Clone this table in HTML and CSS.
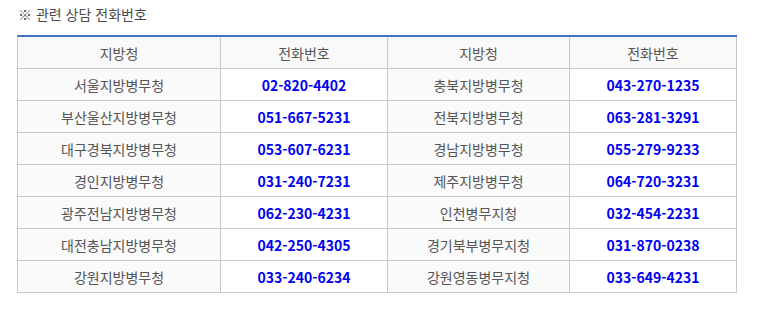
FILE: index.html
```html
<!DOCTYPE html>
<html lang="ko">
<head>
<meta charset="utf-8">
<title>관련 상담 전화번호</title>
<link rel="stylesheet" href="styles.css">
</head>
<body>
<div class="page">
  <p class="title">※ 관련 상담 전화번호</p>
  <div class="grid">
    <div class="cell head">지방청</div>
    <div class="cell head">전화번호</div>
    <div class="cell head">지방청</div>
    <div class="cell head">전화번호</div>

    <div class="cell name">서울지방병무청</div>
    <div class="cell tel">02-820-4402</div>
    <div class="cell name">충북지방병무청</div>
    <div class="cell tel">043-270-1235</div>

    <div class="cell name">부산울산지방병무청</div>
    <div class="cell tel">051-667-5231</div>
    <div class="cell name">전북지방병무청</div>
    <div class="cell tel">063-281-3291</div>

    <div class="cell name">대구경북지방병무청</div>
    <div class="cell tel">053-607-6231</div>
    <div class="cell name">경남지방병무청</div>
    <div class="cell tel">055-279-9233</div>

    <div class="cell name">경인지방병무청</div>
    <div class="cell tel">031-240-7231</div>
    <div class="cell name">제주지방병무청</div>
    <div class="cell tel">064-720-3231</div>

    <div class="cell name">광주전남지방병무청</div>
    <div class="cell tel">062-230-4231</div>
    <div class="cell name">인천병무지청</div>
    <div class="cell tel">032-454-2231</div>

    <div class="cell name">대전충남지방병무청</div>
    <div class="cell tel">042-250-4305</div>
    <div class="cell name">경기북부병무지청</div>
    <div class="cell tel">031-870-0238</div>

    <div class="cell name">강원지방병무청</div>
    <div class="cell tel">033-240-6234</div>
    <div class="cell name">강원영동병무지청</div>
    <div class="cell tel">033-649-4231</div>
  </div>
</div>
</body>
</html>
```
FILE: styles.css
```css
html, body {
  margin: 0;
  padding: 0;
  background: #fff;
}
.page {
  padding: 5px 0 0 17px;
  font-family: "Noto Sans CJK KR", "Noto Sans", sans-serif;
  color: #555;
}
.title {
  margin: 0 0 12px 1px;
  font-size: 14px;
  line-height: 18px;
  color: #4a4a4a;
}
.grid {
  display: grid;
  grid-template-columns: 203px 167px 182px 167px;
  width: 720px;
  box-sizing: border-box;
  border-top: 2px solid #4472c4;
  border-left: 1px solid #c8c8c8;
}
.cell {
  box-sizing: border-box;
  height: 32px;
  border-right: 1px solid #c8c8c8;
  border-bottom: 1px solid #c8c8c8;
  display: flex;
  align-items: center;
  justify-content: center;
  font-size: 14px;
  color: #555;
}
.head {
  background: #f9f9f9;
}
.name {
  background: #fafafa;
}
.tel {
  background: #fff;
  color: #0000f0;
  font-size: 14px;
  font-weight: 700;
}
```
